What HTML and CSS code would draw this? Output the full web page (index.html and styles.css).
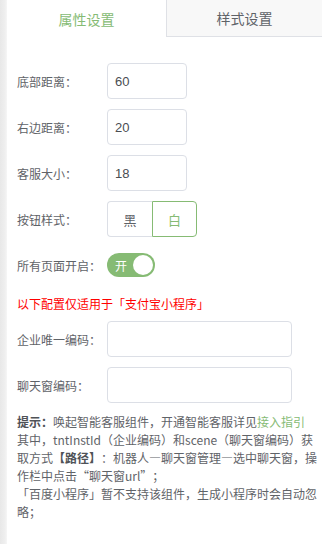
FILE: index.html
```html
<!DOCTYPE html>
<html lang="zh">
<head>
<meta charset="utf-8">
<link rel="stylesheet" href="styles.css">
</head>
<body>
<div class="page">
  <div class="strip"></div>
  <div class="main">
    <div class="tabs">
      <div class="tab active">属性设置</div>
      <div class="tab">样式设置</div>
    </div>
    <div class="form">
      <div class="row">
        <span class="label">底部距离：</span>
        <div class="input small">60</div>
      </div>
      <div class="row">
        <span class="label">右边距离：</span>
        <div class="input small">20</div>
      </div>
      <div class="row">
        <span class="label">客服大小：</span>
        <div class="input small">18</div>
      </div>
      <div class="row">
        <span class="label">按钮样式：</span>
        <div class="btn-group">
          <div class="btn">黑</div>
          <div class="btn on">白</div>
        </div>
      </div>
      <div class="row switch-row">
        <span class="label">所有页面开启：</span>
        <div class="switch"><span class="switch-text">开</span><span class="knob"></span></div>
      </div>
      <div class="notice">以下配置仅适用于「支付宝小程序」</div>
      <div class="row">
        <span class="label">企业唯一编码：</span>
        <div class="input wide"></div>
      </div>
      <div class="row">
        <span class="label">聊天窗编码：</span>
        <div class="input wide"></div>
      </div>
      <div class="tip">
        <div class="line"><b>提示：</b>唤起智能客服组件，开通智能客服详见<span class="link">接入指引</span></div>
        <div class="line">其中，tntInstId（企业编码）和scene（聊天窗编码）获</div>
        <div class="line">取方式<b>【路径】</b>：机器人—聊天窗管理—选中聊天窗，操</div>
        <div class="line">作栏中点击“聊天窗url”；</div>
        <div class="line">「百度小程序」暂不支持该组件，生成小程序时会自动忽</div>
        <div class="line">略；</div>
      </div>
    </div>
  </div>
</div>
</body>
</html>
```

FILE: styles.css
```css
html, body {
  margin: 0;
  padding: 0;
  background: #fff;
}
body {
  font-family: "Noto Sans CJK SC", "Liberation Sans", sans-serif;
  color: #606266;
  font-size: 12px;
  text-spacing-trim: space-all;
}
.page {
  display: flex;
  width: 322px;
  height: 544px;
}
.strip {
  width: 7px;
  flex: none;
  background: linear-gradient(to right, #e8e8e8, #efefef 70%, #f6f6f6);
}
.main {
  flex: 1;
  min-width: 0;
}
.tabs {
  display: flex;
  height: 37px;
}
.tab {
  display: flex;
  align-items: center;
  justify-content: center;
  font-size: 14px;
  color: #5f6368;
  box-sizing: border-box;
}
.tab.active {
  width: 159px;
  color: #86bb74;
  background: #fff;
}
.tab:not(.active) {
  flex: 1;
  background: #f8f8f8;
  border-left: 1px solid #dfe1e6;
  border-bottom: 1px solid #dfe1e6;
  padding-bottom: 1px;
}
.form {
  padding: 26px 0 0 10px;
}
.row {
  display: flex;
  align-items: center;
  margin-bottom: 10px;
}
.label {
  width: 90px;
  flex: none;
  color: #5f6368;
}
.input {
  height: 36px;
  box-sizing: border-box;
  border: 1px solid #dcdfe6;
  border-radius: 4px;
  padding: 0 7px;
  display: flex;
  align-items: center;
  color: #4a4d52;
  font-size: 13px;
  font-family: "Liberation Sans", "Noto Sans CJK SC", sans-serif;
}
.input.small {
  width: 80px;
}
.input.wide {
  width: 185px;
}
.btn-group {
  display: flex;
  height: 36px;
}
.btn {
  width: 45px;
  box-sizing: border-box;
  display: flex;
  align-items: center;
  justify-content: center;
  border: 1px solid #dcdfe6;
  color: #5f6368;
  font-size: 13px;
}
.btn:first-child {
  border-radius: 4px 0 0 4px;
  border-right: none;
}
.btn.on {
  border-color: #86bb74;
  color: #86bb74;
  border-radius: 0 4px 4px 0;
}
.switch-row {
  margin-top: 16px;
  margin-bottom: 0;
}
.switch {
  width: 48px;
  height: 24px;
  border-radius: 12px;
  background: #86bb74;
  position: relative;
  display: flex;
  align-items: center;
  box-sizing: border-box;
}
.switch-text {
  color: #fff;
  font-size: 12px;
  margin-left: 8px;
}
.knob {
  position: absolute;
  right: 2px;
  top: 2px;
  width: 20px;
  height: 20px;
  border-radius: 50%;
  background: #fff;
}
.notice {
  color: #ff0000;
  margin: 19px 0 9px;
  line-height: 16px;
}
.tip {
  line-height: 18px;
  color: #5f6368;
  margin-top: 8px;
}
.line {
  white-space: nowrap;
}
.tip b {
  font-weight: bold;
  color: #4f5257;
}
.link {
  color: #86bb74;
}
```
